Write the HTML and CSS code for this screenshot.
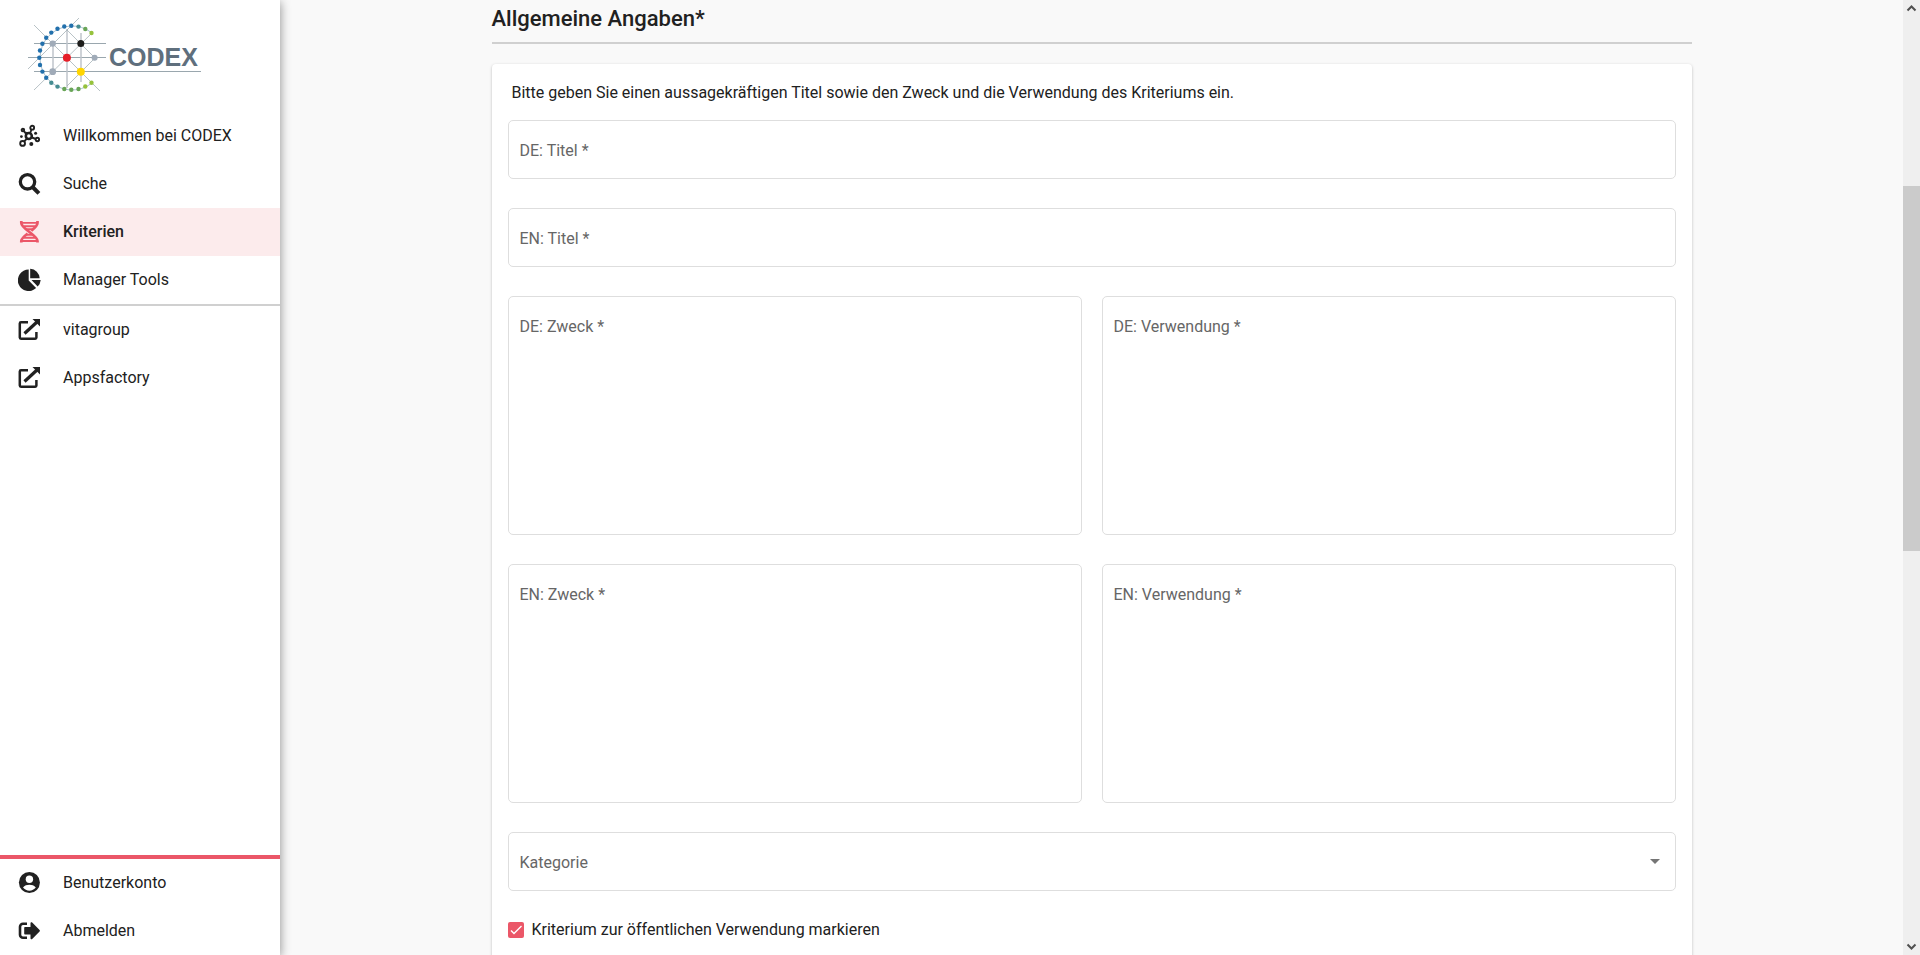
FILE: index.html
```html
<!DOCTYPE html>
<html lang="de">
<head>
<meta charset="utf-8">
<title>CODEX – Kriterien</title>
<link rel="stylesheet" href="styles.css">
</head>
<body>
<div class="app">
  <aside class="sidebar">
    <a class="logo" href="#" aria-label="CODEX">
      <svg width="176" height="76" viewBox="26 16 176 76">
        <g fill="none" stroke="#9aa7ae" stroke-width="1">
          <path d="M34 43.500h72M28 57.500h78M34 71.500h167"/>
          <path d="M53 43v29M67 29v59M81 33v49" stroke="#c0c5cc" stroke-width="1.500"/>
          <path d="M34 25l66 66M28 69l51-51M34 90l58-57M67 86l28-28M67 30l28 28" stroke-width=".7"/>
        </g>
        <path d="M92 33A32 32 0 1 0 92 83" fill="none" stroke="#8fb0c4" stroke-width=".8"/>
        <g fill="#2270ac"><circle cx="71.300" cy="25.700" r="2.200"/><circle cx="64.300" cy="26.500" r="2.200"/><circle cx="57.500" cy="28.800" r="2.200"/><circle cx="51.300" cy="32.600" r="2.200"/><circle cx="46.200" cy="37.700" r="2.200"/><circle cx="42.400" cy="43.700" r="2.200"/><circle cx="40" cy="50.500" r="2.200"/><circle cx="39.300" cy="57.700" r="2.200"/><circle cx="40" cy="65" r="2.200"/><circle cx="42.400" cy="71.600" r="2.200"/><circle cx="46.200" cy="77.800" r="2.200"/></g>
        <g fill="#468c91"><circle cx="78.500" cy="26.600" r="2.200"/><circle cx="51.300" cy="82.700" r="2.200"/><circle cx="57.500" cy="86.600" r="2.200"/></g>
        <g fill="#69a557"><circle cx="85.300" cy="29" r="2.200"/><circle cx="64.300" cy="89" r="2.200"/><circle cx="71.300" cy="89.700" r="2.200"/><circle cx="78.500" cy="89" r="2.200"/></g>
        <g fill="#96c23c"><circle cx="91.500" cy="33" r="2.200"/><circle cx="85.300" cy="86.500" r="2.200"/><circle cx="91.500" cy="82.700" r="2.200"/></g>
        <g fill="#a0abb8"><circle cx="52.700" cy="43.600" r="3.200"/><circle cx="94.600" cy="57.700" r="3"/><circle cx="52.700" cy="71.700" r="3.400"/></g>
        <circle cx="80.800" cy="43.600" r="3.500" fill="#1d1d1b"/><circle cx="66.900" cy="57.700" r="4" fill="#e61e28"/><circle cx="80.800" cy="71.700" r="4" fill="#ffd500"/>
        <text class="logo-text" x="109" y="66">CODEX</text>
      </svg>
    </a>
    <nav class="nav">
      <a class="nav-item" href="#"><svg class="icon" viewBox="0 0 24 24" fill="none" stroke="currentColor"><circle cx="10.800" cy="12" r="3" stroke-width="2.600"/><g stroke-width="1.900"><circle cx="14.200" cy="3.700" r="1.900"/><circle cx="4.900" cy="6" r="1.300"/><circle cx="19.400" cy="15.500" r="1.700"/><circle cx="4.600" cy="19.400" r="2.400"/><path d="M11.900 9.500l1.700-4M8.600 10.200L5.800 7.100M13.900 13.500l4 1.500M8.700 14.800l-2.700 2.900"/></g><g fill="currentColor" stroke="none"><circle cx="13.300" cy="20" r="2"/><circle cx="17.600" cy="9.300" r="1.500"/><circle cx="3.400" cy="12.600" r="1.400"/><circle cx="7.900" cy="9" r="1.200"/></g></svg><span>Willkommen bei CODEX</span></a>
      <a class="nav-item" href="#"><svg class="icon" viewBox="0 0 24 24" fill="none" stroke="currentColor"><circle cx="9.500" cy="9.800" r="7.200" stroke-width="3.300"/><path d="M14.600 15l6.300 6.300" stroke-width="4"/></svg><span>Suche</span></a>
      <a class="nav-item nav-item-active" href="#" aria-current="page"><svg class="icon" viewBox="0 0 24 24" fill="none" stroke="currentColor" stroke-width="2.700"><path d="M3.300 1v2c0 6 16.200 12 16.200 18v1.500M19.500 1v2c0 2.500-3 5.200-6.200 7.800M9.600 13.600C6.300 16.200 3.300 18.500 3.300 21v1.500"/><path d="M4 2.900h15M6 6.300h11M8 9.200h7M8 14.800h7M6 17.800h11M4 21h15" stroke-width="1.900"/></svg><span>Kriterien</span></a>
      <a class="nav-item" href="#"><svg class="icon" viewBox="0 0 24 24" fill="currentColor"><path d="M10.700 1.500v11l7.400 7.600A10.800 10.800 0 1 1 10.700 1.500z"/><path d="M12.200.8A10 10 0 0 1 21.700 10.300h-9.500z"/><path d="M13.500 12H22.700a11 11 0 0 1-3 6.600z"/></svg><span>Manager Tools</span></a>
    </nav>
    <nav class="nav nav-links">
      <a class="nav-item" href="#"><svg class="icon" viewBox="0 0 24 24"><path d="M10 4.200H3a1.200 1.200 0 0 0-1.200 1.200v14.200a1.200 1.200 0 0 0 1.200 1.200h14.200a1.200 1.200 0 0 0 1.200-1.200V14" fill="none" stroke="currentColor" stroke-width="2.500"/><path d="M6.500 15.500L19 4" fill="none" stroke="currentColor" stroke-width="3.200"/><path d="M14.500 1H22v7.500z" fill="currentColor"/></svg><span>vitagroup</span></a>
      <a class="nav-item" href="#"><svg class="icon" viewBox="0 0 24 24"><path d="M10 4.200H3a1.200 1.200 0 0 0-1.200 1.200v14.200a1.200 1.200 0 0 0 1.200 1.200h14.200a1.200 1.200 0 0 0 1.200-1.200V14" fill="none" stroke="currentColor" stroke-width="2.500"/><path d="M6.500 15.500L19 4" fill="none" stroke="currentColor" stroke-width="3.200"/><path d="M14.500 1H22v7.500z" fill="currentColor"/></svg><span>Appsfactory</span></a>
    </nav>
    <nav class="nav nav-account">
      <a class="nav-item" href="#"><svg class="icon" viewBox="0 0 24 24"><circle cx="11.400" cy="11.500" r="10.500" fill="currentColor"/><circle cx="11.400" cy="8.200" r="3.700" fill="#fff"/><path d="M5 16.500c1.500-2 4-2.700 6.400-2.700s4.900.7 6.400 2.700a8 8 0 0 1-12.800 0z" fill="#fff"/></svg><span>Benutzerkonto</span></a>
      <a class="nav-item" href="#"><svg class="icon" viewBox="0 0 24 24"><path d="M9 4.800H5a3 3 0 0 0-3 3v8a3 3 0 0 0 3 3h4" fill="none" stroke="currentColor" stroke-width="2.600"/><path d="M7 8H12.500V4.300c0-.9 1.100-1.300 1.700-.7l7.400 7.500a1 1 0 0 1 0 1.400l-7.400 7.500c-.6.600-1.700.2-1.700-.7v-3.700H7a.8.8 0 0 1-.8-.8V8.800A.8.800 0 0 1 7 8z" fill="currentColor"/></svg><span>Abmelden</span></a>
    </nav>
  </aside>
  <main class="main">
    <section class="content">
      <h1 class="title">Allgemeine Angaben*</h1>
      <form class="card">
        <p class="intro">Bitte geben Sie einen aussagekräftigen Titel sowie den Zweck und die Verwendung des Kriteriums ein.</p>
        <div class="fields">
          <div class="field wide"><label for="title-de">DE: Titel *</label><input id="title-de" type="text"></div>
          <div class="field wide"><label for="title-en">EN: Titel *</label><input id="title-en" type="text"></div>
          <div class="field"><label for="purpose-de">DE: Zweck *</label><textarea id="purpose-de"></textarea></div>
          <div class="field"><label for="use-de">DE: Verwendung *</label><textarea id="use-de"></textarea></div>
          <div class="field"><label for="purpose-en">EN: Zweck *</label><textarea id="purpose-en"></textarea></div>
          <div class="field"><label for="use-en">EN: Verwendung *</label><textarea id="use-en"></textarea></div>
          <div class="field wide"><label for="category">Kategorie</label><select id="category"><option></option></select><svg class="caret" width="10" height="5" viewBox="0 0 10 5"><path d="M0 0h10L5 5z" fill="#757575"/></svg></div>
        </div>
        <div class="check-row">
          <span class="check"><input id="public" type="checkbox" checked><svg width="16" height="16" viewBox="0 0 16 16"><path d="M3 8.500l3 3L13.500 4" fill="none" stroke="#fff" stroke-width="1.400"/></svg></span>
          <label for="public">Kriterium zur öffentlichen Verwendung markieren</label>
        </div>
      </form>
    </section>
  </main>
  <div class="scrollbar" aria-hidden="true">
    <svg width="17" height="17" viewBox="0 0 17 17"><path d="M4.500 10.500l4-4 4 4" fill="none" stroke="#505050" stroke-width="2"/></svg>
    <div class="track"><div class="thumb"></div></div>
    <svg width="17" height="17" viewBox="0 0 17 17"><path d="M4.500 6.500l4 4 4-4" fill="none" stroke="#505050" stroke-width="2"/></svg>
  </div>
</div>
</body>
</html>
```
FILE: styles.css
```css
* { box-sizing: border-box; }
body { margin: 0; font: 16px/24px Roboto, sans-serif; color: #212121; background: #f9f9f9; }
.app { display: flex; height: 100vh; overflow: hidden; }

.sidebar { z-index: 1; flex: none; width: 280px; display: flex; flex-direction: column; background: #fff; box-shadow: 0 2px 10px rgba(0, 0, 0, .45); }
.logo { display: block; height: 112px; padding: 16px 26px; }
.logo svg { display: block; }
.logo-text { font: bold 25px "Liberation Sans", Arial, sans-serif; fill: #5f6f7d; }
.nav { display: flex; flex-direction: column; }
.nav-item { display: flex; align-items: center; gap: 21px; height: 48px; padding: 0 18px; color: inherit; text-decoration: none; }
.nav-item-active { background: #fcebec; font-weight: 500; }
.nav-item-active .icon { color: #eb5768; }
.icon { width: 24px; height: 24px; flex: none; }
.nav-links { border-top: 2px solid #d0d0d0; }
.nav-account { margin-top: auto; border-top: 4px solid #eb5768; }

.main { flex: 1; min-width: 0; overflow: hidden; padding: 0 24px; }
.content { max-width: 1200px; margin: 0 auto; }
.title { margin: 0 0 20px; padding: 5px 0 9px; font-size: 22px; line-height: 28px; font-weight: 500; border-bottom: 2px solid #d0d0d0; }
.card { min-height: 100vh; padding: 16px; background: #fff; border-radius: 4px; box-shadow: 0 1px 3px rgba(0, 0, 0, .25); }
.intro { margin: 0; padding: 0 4px 14px; line-height: 26px; }
.fields { display: grid; grid-template-columns: 1fr 1fr; gap: 29px 20px; }
.wide { grid-column: 1 / -1; }
.field { display: grid; }
.field > * { grid-area: 1 / 1; }
.field label { z-index: 1; place-self: start; padding: 19px 12px 0; color: #666; pointer-events: none; }
.field input, .field textarea, .field select { width: 100%; height: 59px; margin: 0; padding: 18px 12px; font: inherit; color: inherit; background: #fff; border: 1px solid #dedede; border-radius: 5px; appearance: none; }
.field textarea { display: block; height: 239px; resize: none; }
.caret { place-self: center end; margin-right: 16px; pointer-events: none; }

.check-row { display: flex; align-items: center; gap: 8px; padding: 27px 0; }
.check { display: grid; }
.check > * { grid-area: 1 / 1; }
.check input { appearance: none; width: 16px; height: 16px; margin: 0; border-radius: 2px; background: #eb5768; }
.check svg { pointer-events: none; }

.scrollbar { flex: none; width: 17px; display: flex; flex-direction: column; background: #efefef; }
.scrollbar svg { flex: none; }
.track { flex: 1; display: flex; flex-direction: column; padding-top: 169px; }
.thumb { height: 365px; background: #cbcbcb; }
```
